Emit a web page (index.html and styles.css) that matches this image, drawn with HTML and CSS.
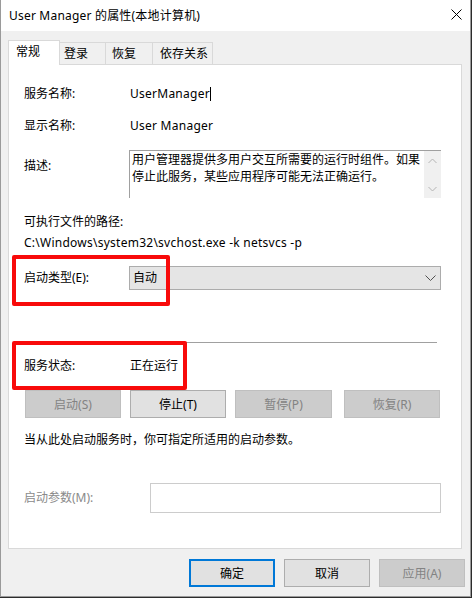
FILE: index.html
```html
<!DOCTYPE html>
<html lang="zh-CN">
<head>
<meta charset="utf-8">
<title>User Manager 的属性(本地计算机)</title>
<link rel="stylesheet" href="styles.css">
</head>
<body>
<div class="window">
  <div class="titlebar">
    <span class="title">User Manager 的属性(本地计算机)</span>
    <svg class="close" width="11" height="11" viewBox="0 0 11 11"><path d="M0.5 0.5L10.5 10.5M10.5 0.5L0.5 10.5" stroke="#000" stroke-width="1" fill="none"/></svg>
  </div>
  <div class="client">
    <div class="tabs">
      <div class="tab active">常规</div>
      <div class="tab t2">登录</div>
      <div class="tab t3">恢复</div>
      <div class="tab t4">依存关系</div>
    </div>
    <div class="panel">
      <div class="row r-name">
        <span class="label">服务名称:</span>
        <span class="value latin">UserManager<span class="caret"></span></span>
      </div>
      <div class="row r-display">
        <span class="label">显示名称:</span>
        <span class="value latin">User Manager</span>
      </div>
      <div class="row r-desc">
        <span class="label desc-label">描述:</span>
        <div class="descbox">
          <div class="desctext">用户管理器提供多用户交互所需要的运行时组件。如果停止此服务，某些应用程序可能无法正确运行。</div>
          <div class="scrollbar">
            <svg width="9" height="6" viewBox="0 0 9 6"><path d="M0.5 5L4.5 1L8.5 5" stroke="#b4b4b4" fill="none"/></svg>
            <svg width="9" height="6" viewBox="0 0 9 6"><path d="M0.5 1L4.5 5L8.5 1" stroke="#b4b4b4" fill="none"/></svg>
          </div>
        </div>
      </div>
      <div class="line r-pathlabel">可执行文件的路径:</div>
      <div class="line r-path latin">C:\Windows\system32\svchost.exe -k netsvcs -p</div>
      <div class="row r-type">
        <span class="label">启动类型(E):</span>
        <div class="combo">
          <span>自动</span>
          <svg width="11" height="6" viewBox="0 0 11 6"><path d="M0.5 0.5L5.5 5.5L10.5 0.5" stroke="#505050" fill="none"/></svg>
        </div>
      </div>
      <div class="separator"></div>
      <div class="row r-status">
        <span class="label">服务状态:</span>
        <span class="value">正在运行</span>
      </div>
      <div class="btnrow">
        <div class="btn disabled b1">启动(S)</div>
        <div class="btn b2">停止(T)</div>
        <div class="btn disabled b3">暂停(P)</div>
        <div class="btn disabled b4">恢复(R)</div>
      </div>
      <div class="line r-hint">当从此处启动服务时，你可指定所适用的启动参数。</div>
      <div class="row r-param">
        <span class="label param-label">启动参数(M):</span>
        <div class="paraminput"></div>
      </div>
      <div class="highlight hl-type"></div>
      <div class="highlight hl-status"></div>
    </div>
    <div class="footer">
      <div class="btn fbtn default">确定</div>
      <div class="btn fbtn">取消</div>
      <div class="btn fbtn disabled">应用(A)</div>
    </div>
  </div>
</div>
</body>
</html>
```

FILE: styles.css
```css
* { box-sizing: border-box; }

html, body {
  margin: 0;
  padding: 0;
}

body {
  background: #2c2c2c;
  width: 472px;
  height: 598px;
  overflow: hidden;
  font-family: "Noto Sans", "Noto Sans CJK SC", sans-serif;
  font-size: 12px;
  color: #000;
}

.latin {
  letter-spacing: 0.25px;
}

.window {
  width: 471px;
  height: 597px;
  border: 1px solid #9a9a9a;
  border-top: none;
  background: #f0f0f0;
  display: flex;
  flex-direction: column;
}

.titlebar {
  height: 31px;
  background: #fff;
  display: flex;
  align-items: center;
  justify-content: space-between;
  padding-left: 8px;
  padding-right: 8px;
}

.title {
  line-height: 31px;
  white-space: nowrap;
  letter-spacing: 0.2px;
}

.close {
  display: block;
  margin-top: -2px;
}

.client {
  flex: 1;
  padding-top: 9px;
  padding-left: 7px;
}

.tabs {
  display: flex;
  height: 25px;
  margin-bottom: -1px;
  position: relative;
  z-index: 1;
}

.tab {
  height: 22px;
  margin-top: 2px;
  border-top: 1px solid #d9d9d9;
  border-right: 1px solid #d9d9d9;
  padding-top: 2px;
  line-height: 18px;
  background: #f0f0f0;
  white-space: nowrap;
}

.tab.active {
  height: 25px;
  margin-top: 0;
  width: 52px;
  border-left: 1px solid #d9d9d9;
  background: #fff;
  padding-left: 7px;
  padding-top: 2px;
}

.tab.t2 { width: 46px; padding-left: 4px; }
.tab.t3 { width: 47px; padding-left: 6px; }
.tab.t4 { width: 60px; padding-left: 7px; }

.panel {
  position: relative;
  width: 454px;
  height: 485px;
  border: 1px solid #d9d9d9;
  background: #fff;
  padding-left: 15px;
  padding-top: 17px;
}

.row {
  display: flex;
  align-items: flex-start;
}

.label {
  width: 105px;
  flex: none;
  line-height: 24px;
  white-space: nowrap;
}

.value {
  line-height: 24px;
  padding-left: 1px;
  white-space: nowrap;
  display: flex;
  align-items: center;
}

.caret {
  display: inline-block;
  width: 1px;
  height: 14px;
  background: #000;
}

.r-display { margin-top: 8px; }

.r-desc { margin-top: 12px; }

.desc-label {
  line-height: 18px;
  padding-top: 7px;
}

.descbox {
  width: 312px;
  height: 48px;
  border-top: 1px solid #a0a0a0;
  border-left: 1px solid #a0a0a0;
  display: flex;
}

.desctext {
  flex: 1;
  padding-left: 2px;
  line-height: 17px;
  overflow: hidden;
}

.scrollbar {
  width: 17px;
  flex: none;
  background: #f0f0f0;
  display: flex;
  flex-direction: column;
  align-items: center;
  justify-content: space-between;
  padding: 7px 0 6px;
}

.scrollbar svg { display: block; }

.line {
  line-height: 18px;
  white-space: nowrap;
}

.r-pathlabel { margin-top: 15px; }
.r-path { margin-top: 3px; }

.r-type { margin-top: 14px; }

.combo {
  width: 312px;
  height: 24px;
  background: #e5e5e5;
  border: 1px solid #acacac;
  display: flex;
  align-items: center;
  justify-content: space-between;
  padding-left: 3px;
  padding-right: 4px;
  line-height: 22px;
}

.combo svg { display: block; }

.separator {
  margin-top: 52px;
  width: 413px;
  height: 1px;
  background: #a0a0a0;
}

.r-status { margin-top: 11px; }

.btnrow {
  display: flex;
  margin-top: 12px;
  padding-left: 1px;
}

.btn {
  height: 28px;
  border: 1px solid #adadad;
  background: #e1e1e1;
  display: flex;
  align-items: center;
  justify-content: center;
  white-space: nowrap;
}

.btn.disabled {
  background: #cccccc;
  border-color: #bfbfbf;
  color: #838383;
}

.b1 { width: 96px; }
.b2 { width: 96px; margin-left: 9px; }
.b3 { width: 97px; margin-left: 9px; }
.b4 { width: 96px; margin-left: 12px; }

.r-hint { margin-top: 13px; }

.r-param {
  margin-top: 34px;
  align-items: center;
}

.param-label {
  width: 126px;
  color: #8a8a8a;
}

.paraminput {
  width: 291px;
  height: 30px;
  border: 1px solid #cccccc;
  background: #fff;
}

.highlight {
  position: absolute;
  border: 4px solid #f80a0a;
  border-radius: 2px;
}

.hl-type {
  left: 3px;
  top: 190px;
  width: 158px;
  height: 51px;
}

.hl-status {
  left: 3px;
  top: 276px;
  width: 175px;
  height: 49px;
}

.footer {
  display: flex;
  justify-content: flex-end;
  margin-top: 10px;
  padding-right: 5px;
}

.fbtn {
  width: 86px;
  margin-left: 9px;
}

.fbtn.default {
  border: 2px solid #0078d7;
}
```
